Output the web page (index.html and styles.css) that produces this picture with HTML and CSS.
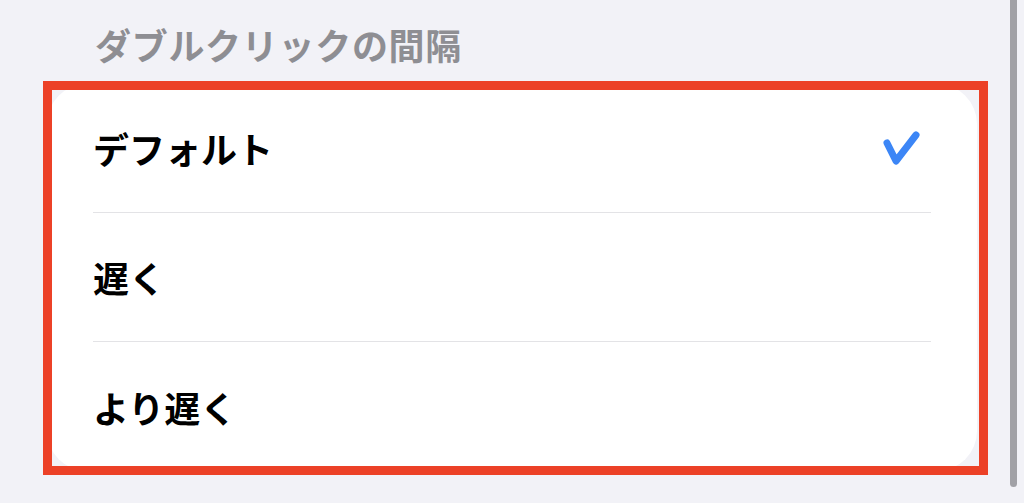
FILE: index.html
```html
<!DOCTYPE html>
<html lang="ja">
<head>
<meta charset="utf-8">
<link rel="stylesheet" href="styles.css">
</head>
<body>
<div class="page">
  <h2 class="section-title">ダブルクリックの間隔</h2>
  <div class="card">
    <div class="row">
      <div class="row-inner">
        <span class="label">デフォルト</span>
        <svg class="check" width="40" height="38" viewBox="0 0 40 38">
          <path d="M5 14 L14 32 L34 6" fill="none" stroke="#3c86f6" stroke-width="7" stroke-linecap="round" stroke-linejoin="round"/>
        </svg>
      </div>
    </div>
    <div class="row">
      <div class="row-inner">
        <span class="label">遅く</span>
      </div>
    </div>
    <div class="row">
      <div class="row-inner last">
        <span class="label">より遅く</span>
      </div>
    </div>
  </div>
</div>
<div class="highlight"></div>
<div class="scrollbar"></div>
</body>
</html>
```

FILE: styles.css
```css
html, body {
  margin: 0;
  padding: 0;
}
body {
  background: #f2f2f7;
  width: 1024px;
  height: 503px;
  overflow: hidden;
  position: relative;
  font-family: "Noto Sans CJK JP", "Noto Sans", sans-serif;
}
.page {
  padding-top: 26px;
  padding-left: 47px;
  width: 930px;
}
.section-title {
  margin: 0 0 22px 48px;
  font-size: 36px;
  line-height: 36px;
  font-weight: 700;
  letter-spacing: 0.7px;
  color: #8e8e93;
}
.card {
  background: #ffffff;
  border-radius: 40px;
  overflow: hidden;
}
.row {
  padding: 0 46px;
}
.row-inner {
  height: 129px;
  box-sizing: border-box;
  display: flex;
  align-items: center;
  justify-content: space-between;
  border-bottom: 1.5px solid #e3e3e6;
}
.row-inner.last {
  border-bottom: none;
}
.label {
  font-size: 36px;
  font-weight: 700;
  color: #000000;
  line-height: 1;
}
.check {
  margin-right: 9px;
  display: block;
}
.highlight {
  position: absolute;
  left: 43px;
  top: 81px;
  width: 945px;
  height: 394px;
  box-sizing: border-box;
  border: 9px solid #ec4127;
}
.scrollbar {
  position: absolute;
  left: 1010px;
  top: -10px;
  width: 7px;
  height: 497px;
  border-radius: 4px;
  background: #a1a1a6;
}
```
